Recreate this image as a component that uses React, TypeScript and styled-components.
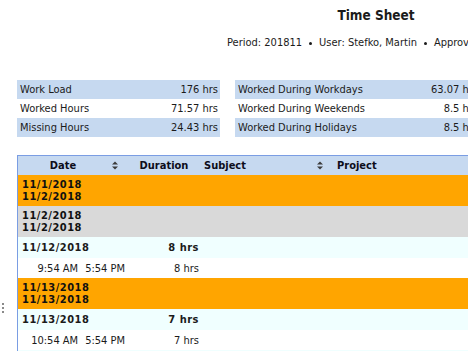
import React from "react"
import styled, { createGlobalStyle } from "styled-components"

const GlobalStyle = createGlobalStyle`
  html, body {
    margin: 0;
    padding: 0;
    background: #ffffff;
    overflow: hidden;
  }
  body {
    font-family: "DejaVu Sans Condensed", "DejaVu Sans", Verdana, sans-serif;
    font-size: 11px;
    color: #1b1b1b;
  }
`

const COLS = "109px 74px 127px 150px"

const Page = styled.div`
  width: 752px;
  padding-top: 6px;
`

const Title = styled.div`
  text-align: center;
  font-weight: bold;
  font-size: 13.5px;
  line-height: 18px;
`

const Period = styled.div`
  margin-top: 12px;
  padding-left: 227px;
  white-space: nowrap;
  line-height: 14px;
`

const Dot = styled.span`
  display: inline-block;
  width: 3px;
  height: 3px;
  border-radius: 50%;
  background: #1b1b1b;
  margin: 0 7px;
  vertical-align: middle;
`

const Summary = styled.div`
  display: flex;
  gap: 15px;
  margin-top: 30px;
  padding-left: 17px;
`

const SummaryTable = styled.div<{ $width: number }>`
  width: ${(p) => p.$width}px;
  flex: none;
  display: flex;
  flex-direction: column;
`

const SummaryRow = styled.div<{ $shaded: boolean }>`
  display: flex;
  justify-content: space-between;
  align-items: center;
  height: 19px;
  padding: 0 2px 0 3px;
  background: ${(p) => (p.$shaded ? "#c6d9f0" : "#ffffff")};
  white-space: nowrap;
`

const GridArea = styled.div`
  display: flex;
  margin-top: 18px;
`

const Gutter = styled.div`
  width: 17px;
  padding-top: 148px;
  padding-left: 2px;
  box-sizing: border-box;
`

const Grid = styled.div`
  border-top: 1px solid #7a9de3;
  border-left: 1px solid #7a9de3;
  display: flex;
  flex-direction: column;
`

const HeaderRow = styled.div`
  display: grid;
  grid-template-columns: ${COLS};
  height: 19px;
  background: #c6d9f0;
  font-weight: bold;
  color: #0d0d1a;
`

const HeadCell = styled.div<{ $align: "left" | "center"; $padLeft: number; $padRight: number }>`
  display: flex;
  align-items: center;
  gap: 4px;
  padding-left: ${(p) => p.$padLeft}px;
  padding-right: ${(p) => p.$padRight}px;
  span {
    flex: 1;
    text-align: ${(p) => p.$align};
  }
`

const GroupRow = styled.div<{ $tone: string }>`
  height: 31px;
  background: ${(p) => p.$tone};
  padding: 4px 0 0 4px;
  box-sizing: border-box;
  font-weight: bold;
  letter-spacing: 0.5px;
  line-height: 12px;
  color: #111;
`

const DataRow = styled.div<{ $bg: string; $h: number; $bold: boolean }>`
  display: grid;
  grid-template-columns: ${COLS};
  height: ${(p) => p.$h}px;
  align-items: center;
  background: ${(p) => p.$bg};
  font-weight: ${(p) => (p.$bold ? "bold" : "normal")};
  letter-spacing: ${(p) => (p.$bold ? "0.5px" : "0")};
  white-space: nowrap;
`

const DateCell = styled.div`
  padding-left: 4px;
`

const TimeCell = styled.div`
  display: flex;
  justify-content: flex-end;
  gap: 7px;
  padding-right: 2px;
`

const DurCell = styled.div`
  text-align: right;
  padding-right: 2px;
`

const SortIcon = () => (
  <svg width="6" height="9" viewBox="0 0 6 9">
    <path d="M0 3.5 L3 0.5 L6 3.5 Z" fill="#3a3a3a" />
    <path d="M0 5.5 L3 8.5 L6 5.5 Z" fill="#3a3a3a" />
  </svg>
)

const Handle = () => (
  <svg width="4" height="12" viewBox="0 0 4 12">
    <rect x="0" y="0" width="2" height="2" fill="#8a8a8a" />
    <rect x="0" y="4" width="2" height="2" fill="#8a8a8a" />
    <rect x="0" y="8" width="2" height="2" fill="#8a8a8a" />
  </svg>
)

type Row =
  | { kind: "group"; tone: string; lines: string[] }
  | { kind: "day"; date: string; dur: string }
  | { kind: "time"; start: string; end: string; dur: string }

const rows: Row[] = [
  { kind: "group", tone: "#ffa500", lines: ["11/1/2018", "11/2/2018"] },
  { kind: "group", tone: "#d9d9d9", lines: ["11/2/2018", "11/2/2018"] },
  { kind: "day", date: "11/12/2018", dur: "8 hrs" },
  { kind: "time", start: "9:54 AM", end: "5:54 PM", dur: "8 hrs" },
  { kind: "group", tone: "#ffa500", lines: ["11/13/2018", "11/13/2018"] },
  { kind: "day", date: "11/13/2018", dur: "7 hrs" },
  { kind: "time", start: "10:54 AM", end: "5:54 PM", dur: "7 hrs" },
  { kind: "day", date: "11/14/2018", dur: "8 hrs" },
]

const left = [
  ["Work Load", "176 hrs"],
  ["Worked Hours", "71.57 hrs"],
  ["Missing Hours", "24.43 hrs"],
]
const right = [
  ["Worked During Workdays", "63.07 hrs"],
  ["Worked During Weekends", "8.5 hrs"],
  ["Worked During Holidays", "8.5 hrs"],
]

const App: React.FC = () => {
  return (
    <>
      <GlobalStyle />
      <Page>
        <Title>Time Sheet</Title>
        <Period>
          Period: 201811
          <Dot />
          User: Stefko, Martin
          <Dot />
          Approved: No
        </Period>
        <Summary>
          <SummaryTable $width={203}>
            {left.map(([k, v], i) => (
              <SummaryRow key={k} $shaded={i % 2 === 0}>
                <span>{k}</span>
                <span>{v}</span>
              </SummaryRow>
            ))}
          </SummaryTable>
          <SummaryTable $width={245}>
            {right.map(([k, v], i) => (
              <SummaryRow key={k} $shaded={i % 2 === 0}>
                <span>{k}</span>
                <span>{v}</span>
              </SummaryRow>
            ))}
          </SummaryTable>
        </Summary>
        <GridArea>
          <Gutter>
            <Handle />
          </Gutter>
          <Grid>
            <HeaderRow>
              <HeadCell $align="center" $padLeft={0} $padRight={9}>
                <span>Date</span>
                <SortIcon />
              </HeadCell>
              <HeadCell $align="center" $padLeft={0} $padRight={0}>
                <span>Duration</span>
              </HeadCell>
              <HeadCell $align="left" $padLeft={3} $padRight={5}>
                <span>Subject</span>
                <SortIcon />
              </HeadCell>
              <HeadCell $align="left" $padLeft={9} $padRight={4}>
                <span>Project</span>
                <SortIcon />
              </HeadCell>
            </HeaderRow>
            {rows.map((r, i) => {
              if (r.kind === "group") {
                return (
                  <GroupRow key={i} $tone={r.tone}>
                    {r.lines.map((l, j) => (
                      <div key={j}>{l}</div>
                    ))}
                  </GroupRow>
                )
              }
              if (r.kind === "day") {
                return (
                  <DataRow key={i} $bg="#f0ffff" $h={21} $bold>
                    <DateCell>{r.date}</DateCell>
                    <DurCell>{r.dur}</DurCell>
                    <div />
                    <div />
                  </DataRow>
                )
              }
              return (
                <DataRow key={i} $bg="#ffffff" $h={20} $bold={false}>
                  <TimeCell>
                    <span>{r.start}</span>
                    <span>{r.end}</span>
                  </TimeCell>
                  <DurCell>{r.dur}</DurCell>
                  <div />
                  <div />
                </DataRow>
              )
            })}
          </Grid>
        </GridArea>
      </Page>
    </>
  )
}

export default App
